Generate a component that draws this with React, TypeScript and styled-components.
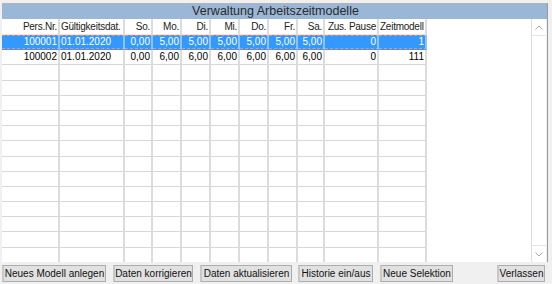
import React from "react";
import styled, { createGlobalStyle } from "styled-components";

const Global = createGlobalStyle`
  html, body { margin: 0; padding: 0; background: #f0f0f0; }
  body { font-family: "Liberation Sans", Arial, sans-serif; }
`;

const Window = styled.div`
  width: 552px;
  height: 284px;
  background: #f0f0f0;
  display: flex;
  flex-direction: column;
  box-sizing: border-box;
  overflow: hidden;
`;

const Panel = styled.div`
  margin: 3px 4px 0 2px;
  border-top: 1px solid #b4b4b4;
  border-right: 1px solid #9a9a9a;
  display: flex;
  flex-direction: column;
`;

const TitleBar = styled.div`
  height: 15px;
  background: #9bb7d7;
  color: #2a2a2a;
  font-size: 12.5px;
  line-height: 15px;
  text-align: center;
  padding-left: 2px;
`;

const Body = styled.div`
  display: flex;
  height: 243px;
  margin-right: 1px;
`;

const GridArea = styled.div`
  flex: 1;
  background: #fff;
  display: flex;
  align-items: flex-start;
  overflow: hidden;
`;

const Table = styled.div`
  display: grid;
  grid-template-columns: 58px 65px 28px 29px 29px 29px 29px 29px 27px 54px 48px;
  grid-template-rows: 16px;
  grid-auto-rows: 15.2px;
  font-size: 10px;
`;

const Cell = styled.div<{ $align?: "left" | "right"; $sel?: boolean; $head?: boolean }>`
  box-sizing: border-box;
  border-right: 2px solid ${(p) => (p.$sel ? "#8fc2f6" : "#dcdcdc")};
  border-bottom: 1px solid ${(p) => (p.$sel ? "#3399ff" : p.$head ? "#e6e6e6" : "#d8d8d8")};
  background: ${(p) => (p.$sel ? "#3399ff" : "#fff")};
  color: ${(p) => (p.$sel ? "#fff" : p.$head ? "#222" : "#000")};
  text-align: ${(p) => p.$align || "right"};
  letter-spacing: ${(p) => (p.$head ? "-0.25px" : "0")};
  padding: 0 1px 0 1px;
  line-height: ${(p) => (p.$head ? "15px" : "14px")};
  white-space: nowrap;
  overflow: hidden;
  position: relative;
  ${(p) =>
    p.$sel
      ? `&::after { content: ""; position: absolute; inset: 0 -2px 0 0; border-top: 1px dashed #ff8a55; border-bottom: 1px dashed #ff8a55; }`
      : ""}
`;

const Scrollbar = styled.div`
  width: 15px;
  background: #fff;
  border-left: 1px solid #dcdcdc;
  display: flex;
  flex-direction: column;
  justify-content: space-between;
  box-sizing: border-box;
`;

const ArrowBox = styled.div<{ $down?: boolean }>`
  height: 16px;
  display: flex;
  align-items: center;
  justify-content: center;
  border-top: ${(p) => (p.$down ? "1px solid #e4e4e4" : "none")};
  border-bottom: ${(p) => (p.$down ? "none" : "1px solid #e4e4e4")};
`;

const ButtonBar = styled.div`
  display: flex;
  align-items: center;
  height: 22px;
  padding: 0 7px 0 2px;
  margin-top: 1px;
`;

const Btn = styled.button<{ $w: number; $gap: number }>`
  width: ${(p) => p.$w}px;
  height: 17px;
  margin-right: ${(p) => p.$gap}px;
  padding: 0;
  background: #e1e1e1;
  border: 1px solid #adadad;
  border-left: 2px solid #c8c8c8;
  font-family: "Liberation Sans", Arial, sans-serif;
  font-size: 10px;
  color: #111;
  line-height: 15px;
  text-align: center;
  white-space: nowrap;
`;

const Spacer = styled.div`
  flex: 1;
`;

const Chevron = ({ down }: { down?: boolean }) => (
  <svg width="8" height="5" viewBox="0 0 8 5">
    <path
      d={down ? "M0.5 0.5 L4 4 L7.5 0.5" : "M0.5 4.5 L4 1 L7.5 4.5"}
      fill="none"
      stroke="#a8a8a8"
      strokeWidth="1"
    />
  </svg>
);

type Align = "left" | "right";
const headers: [string, Align][] = [
  ["Pers.Nr.", "right"],
  ["Gültigkeitsdat.", "left"],
  ["So.", "right"],
  ["Mo.", "right"],
  ["Di.", "right"],
  ["Mi.", "right"],
  ["Do.", "right"],
  ["Fr.", "right"],
  ["Sa.", "right"],
  ["Zus. Pause", "right"],
  ["Zeitmodell", "left"],
];

const rows: string[][] = [
  ["100001", "01.01.2020", "0,00", "5,00", "5,00", "5,00", "5,00", "5,00", "5,00", "0", "1"],
  ["100002", "01.01.2020", "0,00", "6,00", "6,00", "6,00", "6,00", "6,00", "6,00", "0", "111"],
];

const EMPTY = 14;

const buttons: [string, number, number][] = [
  ["Neues Modell anlegen", 104, 7],
  ["Daten korrigieren", 80, 7],
  ["Daten aktualisieren", 92, 6],
  ["Historie ein/aus", 75, 7],
  ["Neue Selektion", 73, 0],
];

export default function App() {
  return (
    <>
      <Global />
      <Window>
        <Panel>
          <TitleBar>Verwaltung Arbeitszeitmodelle</TitleBar>
          <Body>
            <GridArea>
              <Table>
                {headers.map(([h, a], i) => (
                  <Cell key={"h" + i} $align={a} $head>
                    {h}
                  </Cell>
                ))}
                {rows.map((r, ri) =>
                  r.map((v, ci) => (
                    <Cell
                      key={ri + "-" + ci}
                      $align={ci === 1 ? "left" : "right"}
                      $sel={ri === 0}
                    >
                      {v}
                    </Cell>
                  ))
                )}
                {Array.from({ length: EMPTY }).map((_, ri) =>
                  headers.map((_, ci) => <Cell key={"e" + ri + "-" + ci} />)
                )}
              </Table>
            </GridArea>
            <Scrollbar>
              <ArrowBox>
                <Chevron />
              </ArrowBox>
              <ArrowBox $down>
                <Chevron down />
              </ArrowBox>
            </Scrollbar>
          </Body>
        </Panel>
        <ButtonBar>
          {buttons.map(([t, w, g]) => (
            <Btn key={t} $w={w} $gap={g}>
              {t}
            </Btn>
          ))}
          <Spacer />
          <Btn $w={48} $gap={0}>
            Verlassen
          </Btn>
        </ButtonBar>
      </Window>
    </>
  );
}
